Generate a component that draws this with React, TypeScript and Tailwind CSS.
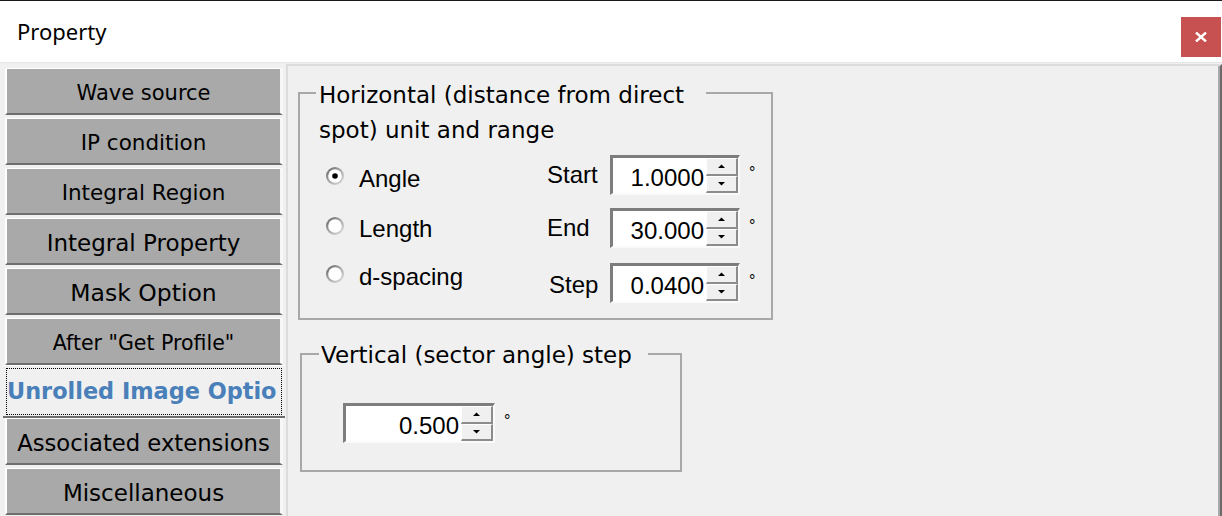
import React from "react";

type Tab = { label: string; cls: string; selected?: boolean };

const tabs: Tab[] = [
  { label: "Wave source", cls: "text-[21px]" },
  { label: "IP condition", cls: "text-[21.5px]" },
  { label: "Integral Region", cls: "text-[21.5px]" },
  { label: "Integral Property", cls: "text-[23px]" },
  { label: "Mask Option", cls: "text-[23.5px]" },
  { label: 'After "Get Profile"', cls: "text-[20.5px]" },
  { label: "Unrolled Image Optio", cls: "text-[22.4px]", selected: true },
  { label: "Associated extensions", cls: "text-[22.7px]" },
  { label: "Miscellaneous", cls: "text-[23px]" },
];

function Radio({ checked }: { checked?: boolean }) {
  return (
    <svg width="18" height="18" viewBox="0 0 18 18" className="shrink-0 mb-[6px]">
      <defs>
        <linearGradient id="rg" x1="0" y1="0" x2="1" y2="1">
          <stop offset="0" stopColor="#5e5e5e" />
          <stop offset="0.5" stopColor="#a9a9a9" />
          <stop offset="1" stopColor="#e4e4e4" />
        </linearGradient>
      </defs>
      <circle cx="9" cy="9" r="9" fill="url(#rg)" />
      <circle cx="9" cy="9" r="6.8" fill="#ffffff" />
      {checked && <circle cx="9" cy="9" r="2.8" fill="#000000" />}
    </svg>
  );
}

function Arrow({ up }: { up?: boolean }) {
  return (
    <svg width="7" height="4" viewBox="0 0 7 4">
      <polygon points={up ? "0,4 3.5,0.5 7,4" : "0,0 3.5,3.5 7,0"} fill="#000" />
    </svg>
  );
}

function SpinBtn({ up }: { up?: boolean }) {
  return (
    <div className="flex-1 flex items-center justify-center bg-[#f0f0f0] border-t border-l border-t-white border-l-white border-b-2 border-r-2 border-b-[#8c8c8c] border-r-[#8c8c8c]">
      <Arrow up={up} />
    </div>
  );
}

function SpinBox({ value, w }: { value: string; w: string }) {
  return (
    <div
      className={`flex ${w} h-[40px] shrink-0 border-t-[3px] border-l-[3px] border-t-[#7d7d7d] border-l-[#7d7d7d] border-b-2 border-r-2 border-b-[#fafafa] border-r-[#fafafa] bg-white`}
    >
      <div className="flex-1 flex justify-end items-start pt-[6px] pr-[2px] font-['Liberation_Sans',sans-serif] text-[24px] leading-[28px] text-black">
        {value}
      </div>
      <div className="w-[32px] flex flex-col">
        <SpinBtn up />
        <SpinBtn />
      </div>
    </div>
  );
}

function Degree() {
  return (
    <div className="ml-[9px] mt-[10px] self-start font-['Liberation_Sans',sans-serif] text-[16px] leading-[16px] text-black">
      °
    </div>
  );
}

function TabButton({ t }: { t: Tab }) {
  if (t.selected) {
    return (
      <div className="ml-[3px] w-[282px] h-[53px] -mt-[3px] -mb-[3px] border-t border-t-white border-b-2 border-b-[#6e6e6e] bg-[#f0f0f0] px-[3px] pt-[2px] pb-[1px]">
        <div className="h-full border border-dotted border-black flex items-center overflow-hidden">
          <span
            className={`whitespace-nowrap font-['DejaVu_Sans',sans-serif] font-bold ${t.cls} text-[#4a80b9]`}
          >
            {t.label}
          </span>
        </div>
      </div>
    );
  }
  return (
    <div className="ml-[5px] w-[278px] h-[47px] bg-[#a9a9a9] border-t border-t-white border-l-2 border-l-white border-r-[3px] border-r-[#f7f7f7] border-b-2 border-b-[#6e6e6e] flex items-center justify-center pt-[4px]">
      <span
        className={`whitespace-nowrap font-['DejaVu_Sans',sans-serif] ${t.cls} leading-[26px] text-black`}
      >
        {t.label}
      </span>
    </div>
  );
}

export default function App() {
  return (
    <div className="w-[1222px] h-[516px] bg-[#f0f0f0] border-t border-t-[#1a1a1a] flex flex-col overflow-hidden">
      {/* Title bar */}
      <div className="h-[62px] shrink-0 bg-white flex items-start justify-between border-b border-b-[#e6e6e6]">
        <div className="pl-[17px] pt-[15px] font-['Noto_Sans',sans-serif] text-[22px] leading-[30px] text-black">
          Property
        </div>
        <div className="mt-[16px] mr-px w-[40px] h-[40px] bg-[#c75050] flex items-center justify-center">
          <svg width="12" height="10" viewBox="0 0 12 10">
            <path d="M1 0.5 L11 9.5 M11 0.5 L1 9.5" stroke="#ffffff" strokeWidth="2.4" />
          </svg>
        </div>
      </div>

      <div className="flex flex-1 min-h-0">
        {/* Tabs */}
        <div className="w-[286px] shrink-0 flex flex-col gap-[3px] pt-[5px]">
          {tabs.map((t) => (
            <TabButton key={t.label} t={t} />
          ))}
        </div>

        {/* Content */}
        <div className="flex-1 mt-px border-t-2 border-l-2 border-t-[#dcdcdc] border-l-[#dcdcdc] border-r-2 border-r-[#6a6a6a]">
          <div className="h-full border-r-2 border-r-[#a9a9a9] flex flex-col">
            {/* Horizontal group */}
            <div className="ml-[10px] mt-[26px] w-[475px] h-[228px] shrink-0 border-2 border-[#a8a8a8] flex flex-col">
              <div className="-mt-[16px] ml-[16px] w-[390px] bg-[#f0f0f0] pl-[3px] font-['DejaVu_Sans',sans-serif] text-[23px] leading-[35px] text-black">
                Horizontal (distance from direct
                <br />
                spot) unit and range
              </div>
              <div className="flex mt-[7px]">
                <div className="ml-[26px] w-[221px] pt-[10px] flex flex-col font-['Liberation_Sans',sans-serif] text-[24px] leading-[28px] text-black">
                  <div className="h-[28px] flex items-center gap-[15px]">
                    <Radio checked />
                    <span>Angle</span>
                  </div>
                  <div className="h-[28px] mt-[22px] flex items-center gap-[15px]">
                    <Radio />
                    <span>Length</span>
                  </div>
                  <div className="h-[28px] mt-[20px] flex items-center gap-[15px]">
                    <Radio />
                    <span>d-spacing</span>
                  </div>
                </div>
                <div className="flex flex-col font-['Liberation_Sans',sans-serif] text-[24px] leading-[28px] text-black">
                  <div className="h-[40px] flex items-center">
                    <span className="w-[63px]">Start</span>
                    <SpinBox value="1.0000" w="w-[130px]" />
                    <Degree />
                  </div>
                  <div className="h-[40px] mt-[13px] flex items-center">
                    <span className="w-[63px]">End</span>
                    <SpinBox value="30.000" w="w-[130px]" />
                    <Degree />
                  </div>
                  <div className="h-[40px] mt-[15px] flex items-center">
                    <span className="w-[63px] pl-[2px] pt-[3px]">Step</span>
                    <SpinBox value="0.0400" w="w-[130px]" />
                    <Degree />
                  </div>
                </div>
              </div>
            </div>

            {/* Vertical group */}
            <div className="ml-[12px] mt-[33px] w-[382px] h-[119px] shrink-0 border-2 border-[#a8a8a8] flex flex-col">
              <div className="-mt-[17px] ml-[17px] w-[329px] bg-[#f0f0f0] pl-[2px] font-['DejaVu_Sans',sans-serif] text-[23px] leading-[35px] text-black">
                Vertical (sector angle) step
              </div>
              <div className="flex ml-[41px] mt-[30px]">
                <SpinBox value="0.500" w="w-[152px]" />
                <Degree />
              </div>
            </div>
          </div>
        </div>
      </div>
    </div>
  );
}
